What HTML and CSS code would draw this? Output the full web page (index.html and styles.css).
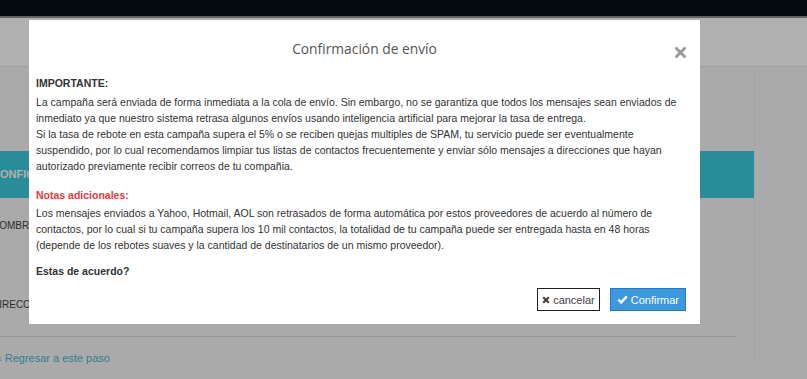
FILE: index.html
```html
<!DOCTYPE html>
<html lang="es">
<head>
  <meta charset="UTF-8" />
  <title>Confirmación de envío</title>
  <link rel="stylesheet" href="styles.css">
</head>
<body>
  <!-- PAGE BEHIND THE MODAL -->
  <div class="topbar"></div>
  <div class="page-head"></div>
  <div class="page">
    <div class="page-main">
      <div class="section-bar">CONFIGURACIÓN</div>
      <div class="field-label">NOMBRE</div>
      <div class="field-label field-label-2">DIRECCIÓN</div>
      <div class="page-foot">
        <a href="#" class="back-link">‹ Regresar a este paso</a>
      </div>
    </div>
    <div class="page-side"></div>
  </div>

  <div class="backdrop"></div>

  <!-- Modal -->
  <div class="modal">
    <div class="modal-header">
      <span class="modal-title">Confirmación de envío</span>
      <span class="close">
        <svg width="11" height="11" viewBox="0 0 11 11"><path d="M1.5 1.5 L9.5 9.5 M9.5 1.5 L1.5 9.5" stroke="#9a9a9a" stroke-width="3" stroke-linecap="round"/></svg>
      </span>
    </div>
    <div class="modal-body">
      <div class="label">IMPORTANTE:</div>
      <p>La campaña será enviada de forma inmediata a la cola de envío. Sin embargo, no se garantiza que todos los mensajes sean enviados de inmediato ya que nuestro sistema retrasa algunos envíos usando inteligencia artificial para mejorar la tasa de entrega.<br>
      Si la tasa de rebote en esta campaña supera el 5% o se reciben quejas multiples de SPAM, tu servicio puede ser eventualmente suspendido, por lo cual recomendamos limpiar tus listas de contactos frecuentemente y enviar sólo mensajes a direcciones que hayan autorizado previamente recibir correos de tu compañia.</p>

      <div class="label label-red">Notas adicionales:</div>
      <p>Los mensajes enviados a Yahoo, Hotmail, AOL son retrasados de forma automática por estos proveedores de acuerdo al número de contactos, por lo cual si tu campaña supera los 10 mil contactos, la totalidad de tu campaña puede ser entregada hasta en 48 horas (depende de los rebotes suaves y la cantidad de destinatarios de un mismo proveedor).</p>

      <div class="question">Estas de acuerdo?</div>

      <div class="actions">
        <button class="btn btn-cancel">
          <svg width="8" height="8" viewBox="0 0 8 8"><path d="M1.2 1.2 L6.8 6.8 M6.8 1.2 L1.2 6.8" stroke="#444" stroke-width="2.2"/></svg>
          cancelar
        </button>
        <button class="btn btn-ok">
          <svg width="11" height="9" viewBox="0 0 11 9"><path d="M1.2 4.6 L4.2 7.4 L9.8 1.4" fill="none" stroke="#fff" stroke-width="2.4"/></svg>
          Confirmar
        </button>
      </div>
    </div>
  </div>
</body>
</html>
```

FILE: styles.css
```css
body {
  margin: 0;
  font-family: "Liberation Sans", Arial, sans-serif;
  background: #f6f6f6;
  overflow: hidden;
}

.topbar {
  height: 16px;
  background: #08111a;
  border-bottom: 2px solid #8a8e92;
}

.page-head {
  height: 48px;
  background: #fff;
  border-bottom: 1px solid #e6e6e6;
}

.page {
  display: grid;
  grid-template-columns: 754px 1fr;
}

.page-main {
  padding-top: 84px;
}

.page-side {
  border-left: 1px solid #f0f0f0;
}

.section-bar {
  height: 47px;
  line-height: 47px;
  background: #3ecbdc;
  color: #fff;
  font-weight: bold;
  font-size: 11px;
  text-indent: -8px;
}

.field-label {
  margin-top: 22px;
  font-size: 10px;
  color: #444;
  text-indent: -8px;
}

.field-label-2 {
  margin-top: 68px;
}

.page-foot {
  margin-top: 26px;
  width: 737px;
  border-top: 1px solid #ddd;
  padding-top: 15px;
}

.back-link {
  display: block;
  font-size: 11px;
  color: #4fb6d0;
  text-decoration: none;
  text-indent: -2px;
}

.backdrop {
  position: fixed;
  top: 0;
  left: 0;
  width: 100%;
  height: 100%;
  background: rgba(0, 0, 0, 0.31);
}

.modal {
  position: fixed;
  top: 20px;
  left: 29px;
  width: 671px;
  background: #fff;
  color: #333;
}

.modal-header {
  position: relative;
  height: 55px;
  text-align: center;
}

.modal-title {
  display: inline-block;
  margin-top: 19px;
  font-family: "Open Sans", sans-serif;
  font-size: 13.8px;
  line-height: 20px;
  color: #555;
}

.close {
  position: absolute;
  top: 24px;
  right: 14px;
}

.modal-body {
  padding: 0 14px 13px 7px;
  font-size: 10.5px;
  line-height: 16px;
}

.modal-body p {
  margin: 0;
}

.label {
  font-weight: bold;
  margin-bottom: 3px;
}

.label-red {
  color: #e8383d;
  margin-top: 13px;
  margin-bottom: 2px;
}

.question {
  font-weight: bold;
  margin-top: 10px;
}

.actions {
  display: flex;
  justify-content: flex-end;
  gap: 10px;
  margin-top: 9px;
}

.btn {
  height: 23px;
  padding: 0 4px;
  font-family: "Liberation Sans", Arial, sans-serif;
  font-size: 11px;
  display: flex;
  align-items: center;
  gap: 3px;
  cursor: pointer;
}

.btn-cancel {
  background: #fff;
  border: 1px solid #222;
  color: #444;
}

.btn-ok {
  background: #3d98de;
  border: 1px solid #2d78bd;
  color: #fff;
  padding: 0 6px;
  gap: 3px;
}
```
